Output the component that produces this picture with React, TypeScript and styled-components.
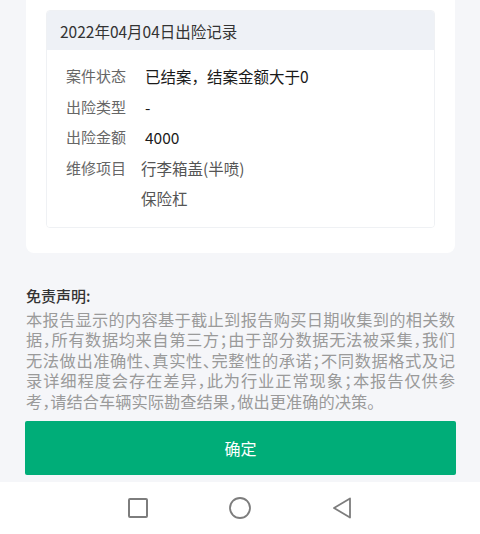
import React from 'react'
import styled, { createGlobalStyle } from 'styled-components'

const GlobalStyle = createGlobalStyle`
  html, body {
    margin: 0;
    padding: 0;
    background-color: #f5f6f9;
    font-family: "Noto Sans CJK SC", "Noto Sans", sans-serif;
  }
`

const Page = styled.div`
  display: flex;
  flex-direction: column;
  height: 534px;
  overflow: hidden;
`

const ReportCard = styled.div`
  margin: 0 25px 0 26px;
  padding: 10px 20px 25px 20px;
  background-color: #ffffff;
  border-radius: 0 0 8px 8px;
`

const Record = styled.div`
  border: 1px solid #eff1f4;
  border-radius: 4px;
  overflow: hidden;
`

const RecordHeader = styled.div`
  height: 39px;
  padding-left: 13px;
  display: flex;
  align-items: center;
  background-color: #eef1f6;
  color: #333;
  font-size: 15.5px;
`

const RecordBody = styled.div`
  padding: 11px 0 13px 19px;
  background-color: #ffffff;
`

const Row = styled.div`
  display: flex;
  gap: 15px;
  line-height: 30.5px;
  font-size: 15px;
`

const Label = styled.div`
  width: 60px;
  flex-shrink: 0;
  color: #666;
`

const Value = styled.div<{ $muted?: boolean }>`
  padding-left: ${(p) => (p.$muted ? '0' : '4px')};
  font-size: 15.5px;
  color: ${(p) => (p.$muted ? '#555' : '#1a1a1a')};
`

const Disclaimer = styled.section`
  margin: 32px 25px 0 26px;
`

const DisclaimerTitle = styled.div`
  font-size: 15px;
  line-height: 22px;
  font-weight: 500;
  color: #333;
`

const DisclaimerText = styled.p`
  margin: 2px 0 0;
  font-size: 16.25px;
  line-height: 20.5px;
  color: #9a9a9a;
  text-align: justify;
  font-feature-settings: "halt" 1;
`

const ConfirmButton = styled.button`
  margin: 10px 24px 0 25px;
  height: 54px;
  border: none;
  border-radius: 2px;
  background-color: #00ad78;
  color: #ffffff;
  font-family: inherit;
  font-size: 16px;
`

const NavBar = styled.nav`
  margin-top: auto;
  height: 52px;
  background-color: #ffffff;
  display: flex;
  align-items: center;
  justify-content: center;
  gap: 80px;
`

const NavIcon = styled.svg`
  width: 22px;
  height: 22px;
  color: #7d7d7d;
`

const rows = [
  { label: '案件状态', values: ['已结案，结案金额大于0'] },
  { label: '出险类型', values: ['-'] },
  { label: '出险金额', values: ['4000'] },
  { label: '维修项目', values: ['行李箱盖(半喷)', '保险杠'], muted: true },
]

const App: React.FC = () => {
  return (
    <Page>
      <GlobalStyle />
      <ReportCard>
        <Record>
          <RecordHeader>2022年04月04日出险记录</RecordHeader>
          <RecordBody>
            {rows.map((row) =>
              row.values.map((v, i) => (
                <Row key={row.label + i}>
                  <Label>{i === 0 ? row.label : ''}</Label>
                  <Value $muted={row.muted}>{v}</Value>
                </Row>
              ))
            )}
          </RecordBody>
        </Record>
      </ReportCard>

      <Disclaimer>
        <DisclaimerTitle>免责声明:</DisclaimerTitle>
        <DisclaimerText>
          本报告显示的内容基于截止到报告购买日期收集到的相关数据，所有数据均来自第三方；由于部分数据无法被采集，我们无法做出准确性、真实性、完整性的承诺；不同数据格式及记录详细程度会存在差异，此为行业正常现象；本报告仅供参考，请结合车辆实际勘查结果，做出更准确的决策。
        </DisclaimerText>
      </Disclaimer>

      <ConfirmButton>确定</ConfirmButton>

      <NavBar>
        <NavIcon viewBox="0 0 22 22" fill="none" stroke="currentColor" strokeWidth="2">
          <rect x="2" y="2" width="18" height="18" rx="1" />
        </NavIcon>
        <NavIcon viewBox="0 0 22 22" fill="none" stroke="currentColor" strokeWidth="1.8">
          <circle cx="11" cy="11" r="10" />
        </NavIcon>
        <NavIcon viewBox="0 0 22 22" fill="none" stroke="currentColor" strokeWidth="1.8" strokeLinejoin="round">
          <path d="M19 1.5 L3 11 L19 20.5 Z" />
        </NavIcon>
      </NavBar>
    </Page>
  )
}

export default App
